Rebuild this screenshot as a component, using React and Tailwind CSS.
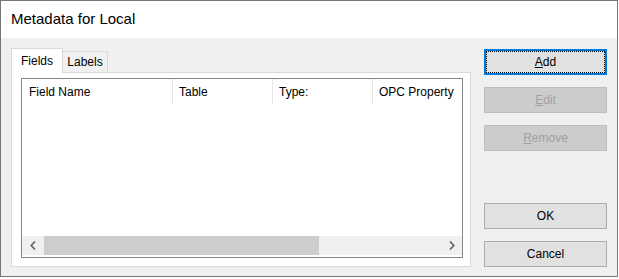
import React from "react";

const font = { fontFamily: '"Liberation Sans", Arial, sans-serif' };

function Btn({ children, focused, disabled }) {
  if (focused) {
    return (
      <div className="relative h-[26px] border-2 border-[#0078d7] bg-[#e1e1e1] flex items-center justify-center text-[12px] text-black">
        <div className="absolute inset-0 border border-dotted border-black" />
        {children}
      </div>
    );
  }
  return (
    <div
      className={
        disabled
          ? "h-[26px] border border-[#bfbfbf] bg-[#cccccc] flex items-center justify-center text-[12px] text-[#a0a0a0]"
          : "h-[26px] border border-[#adadad] bg-[#e1e1e1] flex items-center justify-center text-[12px] text-black"
      }
    >
      {children}
    </div>
  );
}

function Chevron({ dir }) {
  return (
    <svg width="6" height="9" viewBox="0 0 6 9">
      {dir === "left" ? (
        <path d="M5 0.5 L1.2 4.5 L5 8.5" fill="none" stroke="#606060" strokeWidth="1.6" />
      ) : (
        <path d="M1 0.5 L4.8 4.5 L1 8.5" fill="none" stroke="#606060" strokeWidth="1.6" />
      )}
    </svg>
  );
}

export default function App() {
  return (
    <div className="w-[619px] h-[279px] bg-white" style={font}>
      <div className="w-[618px] h-[277px] border border-[#777777] flex flex-col">
        {/* title bar */}
        <div className="h-[37px] bg-white pl-[10px] flex items-center text-[15px] text-black">
          Metadata for Local
        </div>

        {/* body */}
        <div className="flex-1 bg-[#f0f0f0] flex pt-[10px] pl-[10px] pr-[10px] pb-[9px]">
          {/* tab control */}
          <div className="w-[460px] flex flex-col">
            <div className="h-[24px] flex items-end">
              <div className="relative z-10 -mb-px w-[52px] h-[25px] border border-b-0 border-[#d9d9d9] bg-white flex items-center justify-center text-[12px] text-black">
                Fields
              </div>
              <div className="w-[45px] h-[21px] border-t border-r border-[#d9d9d9] bg-[#f0f0f0] flex items-center justify-center text-[12px] text-black">
                Labels
              </div>
            </div>
            <div className="flex-1 border border-[#d9d9d9] bg-white pt-[5px] pl-[9px]">
              {/* list view */}
              <div className="w-[442px] h-[180px] border border-[#828790] bg-white flex flex-col">
                <div className="h-[25px] flex text-[12px] text-black">
                  <div className="w-[151px] h-full border-r border-[#e5e5e5] pl-[7px] flex items-center">Field Name</div>
                  <div className="w-[100px] h-full border-r border-[#e5e5e5] pl-[6px] flex items-center">Table</div>
                  <div className="w-[100px] h-full border-r border-[#e5e5e5] pl-[6px] flex items-center">Type:</div>
                  <div className="flex-1 h-full pl-[6px] flex items-center whitespace-nowrap overflow-hidden">OPC Property</div>
                </div>
                <div className="flex-1" />
                <div className="h-[19px] mb-[2px] flex bg-[#f0f0f0]">
                  <div className="w-[22px] flex items-center justify-center">
                    <Chevron dir="left" />
                  </div>
                  <div className="w-[275px] bg-[#cdcdcd]" />
                  <div className="flex-1" />
                  <div className="w-[21px] flex items-center justify-center">
                    <Chevron dir="right" />
                  </div>
                </div>
              </div>
            </div>
          </div>

          {/* buttons */}
          <div className="ml-[13px] w-[123px] flex flex-col pt-[1px]">
            <Btn focused>
              <span>
                <span className="underline">A</span>dd
              </span>
            </Btn>
            <div className="h-[12px]" />
            <Btn disabled>
              <span>
                <span className="underline">E</span>dit
              </span>
            </Btn>
            <div className="h-[12px]" />
            <Btn disabled>
              <span>
                <span className="underline">R</span>emove
              </span>
            </Btn>
            <div className="flex-1" />
            <Btn>OK</Btn>
            <div className="h-[12px]" />
            <Btn>Cancel</Btn>
          </div>
        </div>
      </div>
    </div>
  );
}
